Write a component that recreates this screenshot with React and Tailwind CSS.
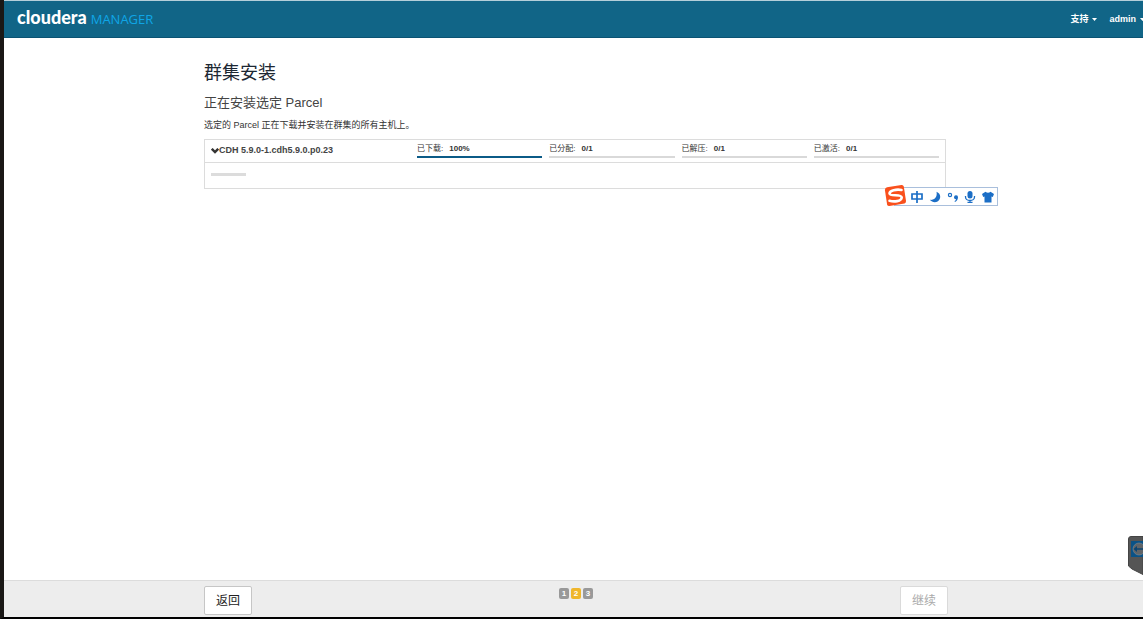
import React from "react";
import clsx from "clsx";

const STAGES = [
  { id: "download", label: "已下载", value: "100%", done: true },
  { id: "distribute", label: "已分配", value: "0/1", done: false },
  { id: "unpack", label: "已解压", value: "0/1", done: false },
  { id: "activate", label: "已激活", value: "0/1", done: false },
];

const STEPS = [1, 2, 3];
const CURRENT_STEP = 2;

function Caret() {
  return (
    <svg className="w-[5px] h-[3px]" viewBox="0 0 5 3" fill="currentColor" aria-hidden="true">
      <path d="M0 0h5L2.5 3z" />
    </svg>
  );
}

function NavMenu({ label }) {
  return (
    <button type="button" className="flex items-center gap-1 text-[9px] leading-4 font-bold text-white">
      {label}
      <Caret />
    </button>
  );
}

function Header() {
  return (
    <header className="flex items-center justify-between h-[38px] shrink-0 pl-[13px] bg-[#116587] border-t border-t-[#b4cfda] border-b border-b-[#0b5373] overflow-hidden">
      <a href="#home" className="flex items-baseline gap-1 mb-[2px] leading-5">
        <span className="font-['Lato',sans-serif] text-[18px] font-black text-white">cloudera</span>
        <span className="font-['Open_Sans',sans-serif] text-[13px] font-medium text-[#0fa5e6]">MANAGER</span>
      </a>
      <nav className="flex gap-3 -mr-[2px]">
        <NavMenu label="支持" />
        <NavMenu label="admin" />
      </nav>
    </header>
  );
}

function Stage({ stage }) {
  return (
    <div
      className={clsx(
        "flex-1 h-[18px] pt-px border-b-2 text-[8px] leading-4 text-[#333]",
        stage.done ? "border-[#0b5b87]" : "border-[#d9d9d9]"
      )}
    >
      {stage.label}:<span className="ml-[6px] font-bold">{stage.value}</span>
    </div>
  );
}

function ParcelPanel() {
  return (
    <section className="mt-[6px] border border-[#dcdcdc]">
      <div className="flex h-[23px] px-[6px] border-b border-[#dcdcdc]">
        <button type="button" className="flex items-center w-[206px] shrink-0 text-[9px] font-bold text-[#444]">
          <svg className="w-2 h-[6px]" viewBox="0 0 8 6" fill="none" stroke="#333" strokeWidth="2.4" aria-hidden="true">
            <path d="M0.8 0.8L4 4L7.2 0.8" />
          </svg>
          CDH 5.9.0-1.cdh5.9.0.p0.23
        </button>
        <div className="flex flex-1 gap-[7px]">
          {STAGES.map((stage) => (
            <Stage key={stage.id} stage={stage} />
          ))}
        </div>
      </div>
      <div className="h-[25px] px-[6px] pt-[10px]">
        <div className="w-[35px] h-[3px] bg-[#dcdcdc]" />
      </div>
    </section>
  );
}

/* Floating input method toolbar */
function ImeBar() {
  return (
    <div className="absolute top-[184px] left-[880px] flex items-center w-[113px] h-[23px]">
      <div className="flex items-center justify-between w-full h-[19px] mt-[2px] ml-[10px] pl-[16px] pr-[3px] -mr-px bg-white border border-[#a9bfdc] text-[#1b6ec6]">
        <svg className="w-3 h-3" viewBox="0 0 12 12" fill="none" stroke="currentColor" strokeWidth="1.7" aria-label="中">
          <path d="M1 3h10v5H1zM6 0v12" />
        </svg>
        <svg className="w-3 h-3" viewBox="0 0 12 12" fill="currentColor" aria-hidden="true">
          <path d="M7.5 0.7C11 2 12 5.500 10.600 8.300C8.800 12 3.500 12.200 0.800 8.800C4 9.600 8.800 7 7.500 0.700z" />
        </svg>
        <svg className="w-3 h-3" viewBox="0 0 12 12" aria-hidden="true">
          <circle cx="3" cy="4" r="1.6" fill="none" stroke="currentColor" strokeWidth="1.2" />
          <path d="M7 6.200a2 2 0 1 1 4 0.300C10.800 8.800 9.700 10.300 8 11L7.500 10C8.500 9.500 8.900 8.900 9 8.200C7.800 8.200 7 7.300 7 6.200z" fill="currentColor" />
        </svg>
        <svg className="w-3 h-3" viewBox="0 0 12 12" fill="currentColor" aria-hidden="true">
          <rect x="3.5" y="0" width="5" height="7.5" rx="2.5" />
          <path d="M1.500 5v1a4.500 3.500 0 0 0 9 0V5M6 9.500v2M3.500 11.400h5" fill="none" stroke="currentColor" strokeWidth="1.300" />
        </svg>
        <svg className="w-3 h-3" viewBox="0 0 12 12" fill="currentColor" aria-hidden="true">
          <path d="M3.500 0.800C5 2 7 2 8.500 0.800L12 3L10.800 6L9.500 5.500V11.500H2.500V5.500L1.200 6L0 3z" />
        </svg>
      </div>
      <svg className="absolute left-0 top-0 w-[23px] h-[23px]" viewBox="0 0 23 23" aria-hidden="true">
        <path d="M3 3.300L17.500 0.900Q19.300 0.700 19.800 2.500L22 17Q22.200 19 20.500 19.400L5.500 22Q3.500 22.200 3.100 20.500L0.900 6Q0.800 3.800 3 3.300z" fill="#f9501c" />
        <path d="M17.500 6C12.500 5 5.500 6.500 5.500 9.500C5.800 13 17.300 9.500 17.700 13.500C17.500 17.500 10 18 5.500 16.800" fill="none" stroke="#fff" strokeWidth="2.600" strokeLinecap="round" />
      </svg>
    </div>
  );
}

/* Remote session tab docked to the window edge */
function RemoteTab() {
  return (
    <svg className="absolute right-0 bottom-[42px] w-[15px] h-[39px]" viewBox="0 0 15 39" aria-hidden="true">
      <path d="M15 0.500H3Q0.500 0.500 0.500 3V30L4 33L15 38.500z" fill="#555" stroke="#444" />
      <path d="M3 5h12v16H3z" fill="#0b5286" />
      <circle cx="11" cy="13" r="6" fill="#606468" stroke="#7d8b96" strokeWidth="0.600" />
      <path d="M5.500 13L9 10V12.200H15V13.800H9V16z" fill="#0b4472" />
    </svg>
  );
}

function Footer() {
  return (
    <footer className="shrink-0 pl-[5px] bg-[#ededed] border-t border-[#dcdcdc]">
      <div className="flex items-start justify-between w-full max-w-[744px] mx-auto pt-[5px] pb-[2px]">
        <button type="button" className="w-12 h-[29px] pt-px bg-white border border-[#c6c6c6] rounded-xs text-[12px] text-[#222]">
          返回
        </button>
        <ol className="flex gap-[2px] pt-[2px]">
          {STEPS.map((step) => (
            <li
              key={step}
              className={clsx(
                "w-[10px] h-[11px] rounded-xs text-center text-[8px] leading-[11px] font-bold text-white",
                step === CURRENT_STEP ? "bg-[#efb62c]" : "bg-[#999]"
              )}
            >
              {step}
            </li>
          ))}
        </ol>
        <button type="button" disabled className="w-12 h-[29px] pt-px bg-white border border-[#dadada] rounded-xs text-[12px] text-[#aaa]">
          继续
        </button>
      </div>
    </footer>
  );
}

export default function App() {
  return (
    <div className="relative flex flex-col min-h-screen overflow-hidden bg-white border-l-4 border-l-[#1a1816] border-b-2 border-b-black font-['Liberation_Sans','Noto_Sans_CJK_SC',sans-serif]">
      <Header />
      <main className="flex-1 pl-[3px]">
        <div className="w-full max-w-[742px] mx-auto pt-[23px]">
          <h1 className="text-[18px] leading-6 text-[#1c2733]">群集安装</h1>
          <h2 className="mt-2 text-[13px] leading-5 text-[#444]">正在安装选定 Parcel</h2>
          <p className="mt-1 text-[9px] leading-4 text-[#333]">选定的 Parcel 正在下载并安装在群集的所有主机上。</p>
          <ParcelPanel />
        </div>
      </main>
      <Footer />
      <ImeBar />
      <RemoteTab />
    </div>
  );
}
